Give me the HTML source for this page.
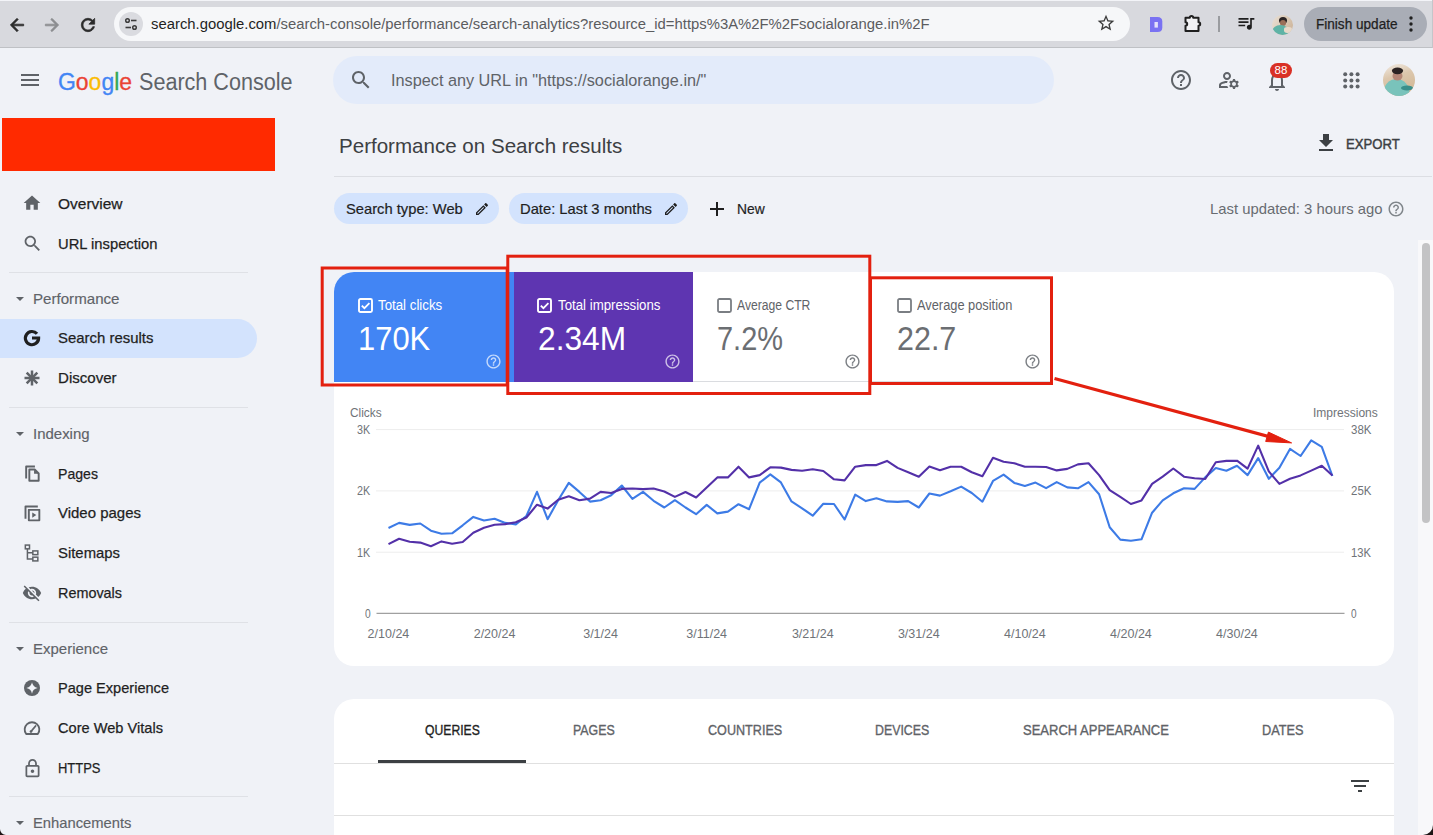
<!DOCTYPE html>
<html><head><meta charset="utf-8"><style>*{box-sizing:border-box;margin:0;padding:0}
html,body{width:1433px;height:835px;overflow:hidden;background:#f0f2f7;font-family:"Liberation Sans",sans-serif;position:relative}
.abs{position:absolute}
.t{position:absolute;white-space:nowrap;line-height:normal;transform-origin:0 0}
svg{overflow:visible}</style></head><body>
<div class="abs" style="left:0;top:0;width:1433px;height:48px;background:#d8d9de"></div>
<div class="abs" style="left:0;top:0;width:1433px;height:1px;background:#f3f4f8"></div>
<div class="abs" style="left:0;top:47px;width:1433px;height:1px;background:#bfc1c5"></div>
<div class="abs" style="left:114px;top:7px;width:1016px;height:34px;border-radius:17px;background:#f6f7f9"></div>
<div class="abs" style="left:119px;top:12px;width:24px;height:24px;border-radius:12px;background:#dadbe0"></div>
<svg class="abs" style="left:123px;top:16px" width="16" height="16" viewBox="0 0 16 16"><circle cx="4.5" cy="4.5" r="1.8" fill="none" stroke="#3c3c3c" stroke-width="1.5"/><line x1="8" y1="4.5" x2="13.5" y2="4.5" stroke="#3c3c3c" stroke-width="1.6"/><circle cx="11.5" cy="11.5" r="1.8" fill="none" stroke="#3c3c3c" stroke-width="1.5"/><line x1="2.5" y1="11.5" x2="8" y2="11.5" stroke="#3c3c3c" stroke-width="1.6"/></svg>
<svg class="abs" style="left:6.5px;top:14.5px" width="20" height="20" viewBox="0 0 24 24"><path d="M20 11H7.83l5.59-5.59L12 4l-8 8 8 8 1.41-1.41L7.83 13H20v-2z" fill="#2b2b2b" stroke="#2b2b2b" stroke-width="0.9"/></svg>
<svg class="abs" style="left:42px;top:14.5px" width="20" height="20" viewBox="0 0 24 24"><path d="M12 4l-1.41 1.41L16.17 11H4v2h12.17l-5.58 5.59L12 20l8-8z" fill="#8c8d90" stroke="#8c8d90" stroke-width="0.9"/></svg>
<svg class="abs" style="left:78.3px;top:14.5px" width="20" height="20" viewBox="0 0 24 24"><path stroke="#2b2b2b" stroke-width="0.9" d="M17.65 6.35C16.2 4.9 14.21 4 12 4c-4.42 0-7.99 3.58-7.99 8s3.57 8 7.99 8c3.73 0 6.84-2.55 7.73-6h-2.08c-.82 2.33-3.04 4-5.65 4-3.31 0-6-2.69-6-6s2.69-6 6-6c1.66 0 3.14.69 4.22 1.78L13 11h7V4l-2.35 2.35z" fill="#2b2b2b"/></svg>
<div class="t" style="left:151px;top:15.6px;font-size:14.85px;color:#5b5c5f"><span style="color:#1f1f1f">search.google.com</span>/search-console/performance/search-analytics?resource_id=https%3A%2F%2Fsocialorange.in%2F</div>
<svg class="abs" style="left:1096px;top:13px" width="20" height="20" viewBox="0 0 24 24"><path d="M22 9.24l-7.19-.62L12 2 9.19 8.63 2 9.24l5.46 4.73L5.82 21 12 17.27 18.18 21l-1.63-7.03L22 9.24zM12 15.4l-3.76 2.27 1-4.28-3.32-2.88 4.38-.38L12 6.1l1.71 4.04 4.38.38-3.32 2.88 1 4.28L12 15.4z" fill="#3c3c3c"/></svg>
<svg class="abs" style="left:1150px;top:16.7px" width="13" height="15" viewBox="0 0 13 15"><path d="M0 0H7.5Q12.3 0 12.3 4.5V10.5Q12.3 15 7.5 15H0Z" fill="#7a72f2"/><rect x="4.5" y="5" width="3.4" height="5.6" fill="#e3e1fb"/></svg>
<svg class="abs" style="left:1184px;top:14px" width="18" height="18" viewBox="0 0 18 18"><path d="M1.5 3.8H5.8A1.7 1.7 0 0 1 9.2 3.8H14.5V8.3A1.7 1.7 0 0 1 14.5 11.7V17H1.5V11.7A1.7 1.7 0 0 0 1.5 8.3Z" fill="#f2f2f4" stroke="#1f1f1f" stroke-width="2" stroke-linejoin="round"/></svg>
<div class="abs" style="left:1218px;top:16px;width:1.5px;height:16px;background:#9a9ca0"></div>
<svg class="abs" style="left:1236px;top:13px" width="20" height="20" viewBox="0 0 24 24"><path d="M22 6h-5v8.18c-.31-.11-.65-.18-1-.18-1.66 0-3 1.34-3 3s1.34 3 3 3 3-1.34 3-3V8h3V6zm-7 0H3v2h12V6zm0 4H3v2h12v-2zm-4 4H3v2h8v-2z" fill="#1f1f1f"/></svg>
<div class="abs" style="left:1272px;top:14.5px;width:21px;height:20px;border-radius:50%;overflow:hidden;background:linear-gradient(120deg,#e9e0d6 0%,#dccbb8 50%,#c8ad90 100%)"><div class="abs" style="left:7px;top:2px;width:8px;height:7px;border-radius:50%;background:#2c2525"></div><div class="abs" style="left:8px;top:5px;width:6px;height:6px;border-radius:50%;background:#9a6f58"></div><div class="abs" style="left:0px;top:10px;width:17px;height:14px;border-radius:50% 50% 0 0;background:#5fb3a6"></div><div class="abs" style="left:12px;top:12px;width:8px;height:6px;border-radius:40%;background:#e7d9c9"></div></div>
<div class="abs" style="left:1304px;top:7px;width:123px;height:34px;border-radius:17px;background:#a9adb6"></div>
<div class="t" style="left:1316.0px;top:16.3px;font-size:14.00px;color:#1f1f1f;transform:scaleX(0.9696);-webkit-text-stroke:0.25px #1f1f1f;">Finish update</div>
<svg class="abs" style="left:1406px;top:15px" width="10" height="18" viewBox="0 0 10 18"><circle cx="5" cy="3" r="1.7" fill="#1f1f1f"/><circle cx="5" cy="9" r="1.7" fill="#1f1f1f"/><circle cx="5" cy="15" r="1.7" fill="#1f1f1f"/></svg>
<div class="abs" style="left:1431.5px;top:0;width:1.5px;height:48px;background:#c4c6ca"></div>
<svg class="abs" style="left:18px;top:68px" width="24" height="24" viewBox="0 0 24 24"><path d="M3 18h18v-2H3v2zm0-5h18v-2H3v2zm0-7v2h18V6H3z" fill="#5f6368"/></svg>
<div class="t" style="left:58px;top:68.8px;font-size:23px;transform:scaleX(0.9977);-webkit-text-stroke:0.3px currentColor"><span style="color:#4285f4">G</span><span style="color:#ea4335">o</span><span style="color:#fbbc05">o</span><span style="color:#4285f4">g</span><span style="color:#34a853">l</span><span style="color:#ea4335">e</span></div>
<div class="t" style="left:138.5px;top:68.6px;font-size:23.00px;color:#5f6368;transform:scaleX(0.9380);">Search Console</div>
<div class="abs" style="left:333px;top:56px;width:721px;height:48px;border-radius:24px;background:#e3ebfa"></div>
<svg class="abs" style="left:349px;top:68px" width="24" height="24" viewBox="0 0 24 24"><path d="M15.5 14h-.79l-.28-.27C15.41 12.59 16 11.11 16 9.5 16 5.91 13.09 3 9.5 3S3 5.91 3 9.5 5.91 16 9.5 16c1.61 0 3.09-.59 4.23-1.57l.27.28v.79l5 4.99L20.49 19l-4.99-5zm-6 0C7.01 14 5 11.99 5 9.5S7.01 5 9.5 5 14 7.01 14 9.5 11.99 14 9.5 14z" fill="#5f6368"/></svg>
<div class="t" style="left:391.0px;top:70.5px;font-size:16.25px;color:#5f6368;">Inspect any URL in "https://socialorange.in/"</div>
<svg class="abs" style="left:1169px;top:68px" width="24" height="24" viewBox="0 0 24 24"><path d="M11 18h2v-2h-2v2zm1-16C6.48 2 2 6.48 2 12s4.48 10 10 10 10-4.48 10-10S17.52 2 12 2zm0 18c-4.41 0-8-3.59-8-8s3.59-8 8-8 8 3.59 8 8-3.59 8-8 8zm0-14c-2.21 0-4 1.79-4 4h2c0-1.1.9-2 2-2s2 .9 2 2c0 2-3 1.75-3 5h2c0-2.25 3-2.5 3-5 0-2.21-1.79-4-4-4z" fill="#5f6368"/></svg>
<svg class="abs" style="left:1217px;top:68px" width="24" height="24" viewBox="0 0 24 24"><path d="M4 18v-.65c0-.34.16-.66.41-.81C6.1 15.53 8.03 15 10 15c.03 0 .05 0 .08.01.1-.7.3-1.37.59-1.98-.22-.02-.44-.03-.67-.03-2.42 0-4.68.67-6.61 1.82-.88.52-1.39 1.5-1.39 2.53V20h9.26c-.42-.6-.75-1.28-.97-2H4zm6-6c2.21 0 4-1.790 4-4s-1.79-4-4-4-4 1.79-4 4 1.79 4 4 4zm0-6c1.1 0 2 .9 2 2s-.9 2-2 2-2-.9-2-2 .9-2 2-2zm10.750 10c0-.22-.03-.42-.06-.63l1.14-1.01-1-1.73-1.45.49c-.32-.27-.68-.48-1.08-.63L18 11h-2l-.3 1.49c-.4.15-.76.36-1.08.63l-1.45-.49-1 1.73 1.14 1.01c-.03.21-.06.41-.06.63s.03.42.06.63l-1.14 1.01 1 1.73 1.45-.49c.32.27.68.48 1.08.63L16 21h2l.3-1.49c.4-.15.76-.36 1.08-.63l1.45.49 1-1.73-1.14-1.01c.03-.21.06-.41.06-.63zM17 18c-1.1 0-2-.9-2-2s.9-2 2-2 2 .9 2 2-.9 2-2 2z" fill="#5f6368"/></svg>
<svg class="abs" style="left:1265px;top:69px" width="24" height="24" viewBox="0 0 24 24"><path d="M12 22c1.1 0 2-.9 2-2h-4c0 1.1.89 2 2 2zm6-6v-5c0-3.07-1.64-5.640-4.5-6.32V4c0-.83-.67-1.5-1.5-1.5s-1.5.67-1.5 1.5v.68C7.63 5.36 6 7.92 6 11v5l-2 2v1h16v-1l-2-2zm-2 1H8v-6c0-2.48 1.51-4.5 4-4.5s4 2.02 4 4.5v6z" fill="#5f6368"/></svg>
<div class="abs" style="left:1270px;top:62.5px;width:22px;height:15.5px;border-radius:8px;background:#d93025"></div>
<div class="t" style="left:1270px;top:63px;width:22px;text-align:center;font-size:11.5px;color:#fff;line-height:15px">88</div>
<svg class="abs" style="left:1342.5px;top:71.5px" width="18" height="18" viewBox="0 0 18 18"><circle cx="2.2" cy="2.2" r="2" fill="#5f6368"/><circle cx="2.2" cy="8.4" r="2" fill="#5f6368"/><circle cx="2.2" cy="14.6" r="2" fill="#5f6368"/><circle cx="8.4" cy="2.2" r="2" fill="#5f6368"/><circle cx="8.4" cy="8.4" r="2" fill="#5f6368"/><circle cx="8.4" cy="14.6" r="2" fill="#5f6368"/><circle cx="14.6" cy="2.2" r="2" fill="#5f6368"/><circle cx="14.6" cy="8.4" r="2" fill="#5f6368"/><circle cx="14.6" cy="14.6" r="2" fill="#5f6368"/></svg>
<svg class="abs" style="left:1383px;top:64px" width="32" height="32" viewBox="0 0 32 32"><defs><clipPath id="av"><circle cx="16" cy="16" r="16"/></clipPath><linearGradient id="avg" x1="0" y1="0" x2="0.3" y2="1"><stop offset="0" stop-color="#f1ebe4"/><stop offset="0.45" stop-color="#dcc7ad"/><stop offset="1" stop-color="#d2b896"/></linearGradient></defs><g clip-path="url(#av)"><rect width="32" height="32" fill="url(#avg)"/><ellipse cx="13.5" cy="29" rx="13" ry="14" fill="#79c3bb"/><ellipse cx="24" cy="24" rx="6" ry="2.6" fill="#3a8f8a"/><ellipse cx="14.5" cy="12" rx="5" ry="4.6" fill="#b48676"/><ellipse cx="14.5" cy="6.8" rx="5.6" ry="3.4" fill="#2a2222"/></g></svg>
<div class="abs" style="left:2px;top:118px;width:273px;height:53px;background:#ff2a00"></div>
<div class="abs" style="left:0;top:319px;width:257px;height:39px;background:#d3e3fd;border-radius:0 20px 20px 0"></div>
<div class="t" style="left:58.0px;top:194.5px;font-size:15.00px;color:#1f1f1f;transform:scaleX(1.0318);-webkit-text-stroke:0.25px #1f1f1f;">Overview</div>
<div class="t" style="left:58.0px;top:234.5px;font-size:15.00px;color:#1f1f1f;transform:scaleX(0.9836);-webkit-text-stroke:0.25px #1f1f1f;">URL inspection</div>
<div class="abs" style="left:9px;top:272px;width:239px;height:1px;background:#dfe1e6"></div>
<div class="t" style="left:33.3px;top:289.7px;font-size:15.00px;color:#5f6368;transform:scaleX(1.0073);-webkit-text-stroke:0.15px #5f6368;">Performance</div>
<div class="abs" style="left:16px;top:297.0px;width:0;height:0;border-left:4px solid transparent;border-right:4px solid transparent;border-top:4.5px solid #5f6368"></div>
<div class="t" style="left:58.0px;top:329.4px;font-size:15.00px;color:#1f1f1f;transform:scaleX(0.9950);-webkit-text-stroke:0.25px #1f1f1f;">Search results</div>
<div class="t" style="left:58.0px;top:369.4px;font-size:15.00px;color:#1f1f1f;transform:scaleX(1.0044);-webkit-text-stroke:0.25px #1f1f1f;">Discover</div>
<div class="abs" style="left:9px;top:407px;width:239px;height:1px;background:#dfe1e6"></div>
<div class="t" style="left:33.3px;top:424.7px;font-size:15.00px;color:#5f6368;transform:scaleX(0.9980);-webkit-text-stroke:0.15px #5f6368;">Indexing</div>
<div class="abs" style="left:16px;top:432.0px;width:0;height:0;border-left:4px solid transparent;border-right:4px solid transparent;border-top:4.5px solid #5f6368"></div>
<div class="t" style="left:58.0px;top:464.6px;font-size:15.00px;color:#1f1f1f;transform:scaleX(0.9405);-webkit-text-stroke:0.25px #1f1f1f;">Pages</div>
<div class="t" style="left:58.0px;top:504.4px;font-size:15.00px;color:#1f1f1f;transform:scaleX(0.9984);-webkit-text-stroke:0.25px #1f1f1f;">Video pages</div>
<div class="t" style="left:58.0px;top:544.4px;font-size:15.00px;color:#1f1f1f;transform:scaleX(0.9915);-webkit-text-stroke:0.25px #1f1f1f;">Sitemaps</div>
<div class="t" style="left:58.0px;top:584.4px;font-size:15.00px;color:#1f1f1f;transform:scaleX(0.9597);-webkit-text-stroke:0.25px #1f1f1f;">Removals</div>
<div class="abs" style="left:9px;top:622px;width:239px;height:1px;background:#dfe1e6"></div>
<div class="t" style="left:33.3px;top:639.7px;font-size:15.00px;color:#5f6368;transform:scaleX(0.9994);-webkit-text-stroke:0.15px #5f6368;">Experience</div>
<div class="abs" style="left:16px;top:647.0px;width:0;height:0;border-left:4px solid transparent;border-right:4px solid transparent;border-top:4.5px solid #5f6368"></div>
<div class="t" style="left:58.0px;top:679.0px;font-size:15.00px;color:#1f1f1f;transform:scaleX(0.9716);-webkit-text-stroke:0.25px #1f1f1f;">Page Experience</div>
<div class="t" style="left:58.0px;top:719.0px;font-size:15.00px;color:#1f1f1f;transform:scaleX(0.9738);-webkit-text-stroke:0.25px #1f1f1f;">Core Web Vitals</div>
<div class="t" style="left:58.0px;top:758.8px;font-size:15.00px;color:#1f1f1f;transform:scaleX(0.8644);-webkit-text-stroke:0.25px #1f1f1f;">HTTPS</div>
<div class="abs" style="left:9px;top:796px;width:239px;height:1px;background:#dfe1e6"></div>
<div class="t" style="left:33.3px;top:813.7px;font-size:15.00px;color:#5f6368;transform:scaleX(0.9844);-webkit-text-stroke:0.15px #5f6368;">Enhancements</div>
<div class="abs" style="left:16px;top:821.0px;width:0;height:0;border-left:4px solid transparent;border-right:4px solid transparent;border-top:4.5px solid #5f6368"></div>
<svg class="abs" style="left:22.0px;top:193.0px" width="20" height="20" viewBox="0 0 24 24"><path d="M10 20v-6h4v6h5v-8h3L12 3 2 12h3v8z" fill="#5f6368"/></svg>
<svg class="abs" style="left:21.5px;top:233.0px" width="21" height="21" viewBox="0 0 24 24"><path d="M15.5 14h-.79l-.28-.27C15.41 12.59 16 11.11 16 9.5 16 5.91 13.09 3 9.5 3S3 5.91 3 9.5 5.910 16 9.5 16c1.61 0 3.09-.59 4.23-1.57l.27.28v.79l5 4.99L20.49 19l-4.99-5zm-6 0C7.01 14 5 11.99 5 9.5S7.01 5 9.5 5 14 7.01 14 9.5 11.99 14 9.5 14z" fill="#5f6368"/></svg>
<svg class="abs" style="left:22.3px;top:328.2px" width="20" height="20" viewBox="0 0 20 20"><path d="M15.0 5.8A6.6 6.6 0 1 0 16.6 10H10" fill="none" stroke="#1f1f1f" stroke-width="3.2"/></svg>
<svg class="abs" style="left:22.0px;top:368.0px" width="20" height="20" viewBox="0 0 24 24"><g stroke="#5f6368" stroke-width="3" stroke-linecap="butt"><line x1="12" y1="3" x2="12" y2="21"/><line x1="3" y1="12" x2="21" y2="12"/><line x1="5.6" y1="5.6" x2="18.4" y2="18.4"/><line x1="18.4" y1="5.6" x2="5.6" y2="18.4"/></g></svg>
<svg class="abs" style="left:22.0px;top:463.0px" width="20" height="20" viewBox="0 0 24 24"><g fill="none" stroke="#5f6368" stroke-width="2.3" stroke-linejoin="round"><path d="M5 18.5V4.2H15.5"/><path d="M8.8 7.8H15.2L20 12.6V21.2H8.8Z"/></g><path d="M14.5 8v5h5z" fill="#5f6368"/></svg>
<svg class="abs" style="left:22.0px;top:503.0px" width="20" height="20" viewBox="0 0 24 24"><g fill="none" stroke="#5f6368" stroke-width="2.3" stroke-linejoin="round"><path d="M4.2 19V4.2H19"/><rect x="8.2" y="8.2" width="12.6" height="12.6"/></g><path d="M12.3 11.3L17.2 14.5L12.3 17.7Z" fill="#5f6368"/></svg>
<svg class="abs" style="left:22.0px;top:543.0px" width="20" height="20" viewBox="0 0 24 24"><g fill="none" stroke="#5f6368" stroke-width="1.8"><rect x="4" y="2.5" width="5" height="4.5"/><rect x="13" y="9.5" width="6" height="4.5"/><rect x="13" y="17" width="6" height="4.5"/><path d="M6.5 7v12.3H13M6.5 11.8H13"/></g></svg>
<svg class="abs" style="left:22.0px;top:583.0px" width="20" height="20" viewBox="0 0 24 24"><path d="M12 7c2.76 0 5 2.24 5 5 0 .65-.13 1.26-.36 1.83l2.92 2.92c1.51-1.26 2.7-2.89 3.43-4.75-1.73-4.39-6-7.5-11-7.5-1.4 0-2.74.25-3.98.7l2.16 2.16C10.74 7.13 11.35 7 12 7zM2 4.27l2.28 2.28.46.46C3.08 8.3 1.78 10.02 1 12c1.73 4.39 6 7.5 11 7.5 1.55 0 3.03-.3 4.38-.84l.42.42L19.73 22 21 20.73 3.27 3 2 4.27zM7.53 9.8l1.55 1.55c-.05.21-.08.43-.08.65 0 1.66 1.34 3 3 3 .22 0 .44-.03.65-.08l1.55 1.55c-.67.33-1.41.53-2.2.53-2.76 0-5-2.24-5-5 0-.79.2-1.53.53-2.2zm4.31-.78l3.15 3.15.02-.16c0-1.66-1.34-3-3-3l-.17.01z" fill="#5f6368"/></svg>
<svg class="abs" style="left:22.0px;top:678.0px" width="20" height="20" viewBox="0 0 24 24"><circle cx="12" cy="12" r="9.6" fill="#5f6368"/><path d="M12 5.2 Q13 11 18.8 12 Q13 13 12 18.8 Q11 13 5.2 12 Q11 11 12 5.2z" fill="#f1f3f8"/></svg>
<svg class="abs" style="left:22.0px;top:718.0px" width="20" height="20" viewBox="0 0 24 24"><g fill="none" stroke="#5f6368" stroke-width="2.2" stroke-linejoin="round" stroke-linecap="round"><path d="M5 19.2A8.8 8.8 0 1 1 19 19.2Z"/><path d="M10.8 16.2L16.3 9.6"/></g><circle cx="10.8" cy="16.2" r="1.6" fill="#5f6368"/></svg>
<svg class="abs" style="left:22.0px;top:758.0px" width="21" height="21" viewBox="0 0 24 24"><path d="M18 8h-1V6c0-2.76-2.24-5-5-5S7 3.24 7 6v2H6c-1.1 0-2 .9-2 2v10c0 1.1.9 2 2 2h12c1.1 0 2-.9 2-2V10c0-1.1-.9-2-2-2zM9 6c0-1.66 1.34-3 3-3s3 1.34 3 3v2H9V6zm9 14H6V10h12v10zm-6-3c1.1 0 2-.9 2-2s-.9-2-2-2-2 .9-2 2 .9 2 2 2z" fill="#5f6368"/></svg>
<div class="t" style="left:338.7px;top:133.8px;font-size:21.00px;color:#3c4043;transform:scaleX(0.9787);">Performance on Search results</div>
<svg class="abs" style="left:1314.0px;top:131.0px" width="24" height="24" viewBox="0 0 24 24"><path d="M19 9h-4V3H9v6H5l7 7 7-7zM5 18v2h14v-2H5z" fill="#3c4043"/></svg>
<div class="t" style="left:1346.0px;top:135.9px;font-size:14.50px;color:#3c4043;transform:scaleX(0.9063);-webkit-text-stroke:0.45px #3c4043;">EXPORT</div>
<div class="abs" style="left:334px;top:176px;width:1098px;height:1px;background:#dcdee3"></div>
<div class="abs" style="left:334px;top:193px;width:165px;height:31px;border-radius:16px;background:#d3e3fd"></div>
<div class="t" style="left:346.2px;top:199.5px;font-size:15.00px;color:#1f1f1f;transform:scaleX(0.9819);-webkit-text-stroke:0.20px #1f1f1f;">Search type: Web</div>
<div class="abs" style="left:508.5px;top:193px;width:179.5px;height:31px;border-radius:16px;background:#d3e3fd"></div>
<div class="t" style="left:520.0px;top:199.5px;font-size:15.00px;color:#1f1f1f;transform:scaleX(0.9833);-webkit-text-stroke:0.20px #1f1f1f;">Date: Last 3 months</div>
<svg class="abs" style="left:473.5px;top:201.0px" width="16" height="16" viewBox="0 0 24 24"><path d="M3 17.25V21h3.75L17.81 9.94l-3.75-3.75L3 17.25zM5.92 19H5v-.92l9.06-9.06.92.92L5.92 19zM20.71 5.63l-2.34-2.34c-.2-.2-.45-.29-.71-.29s-.51.1-.7.29l-1.83 1.83 3.75 3.75 1.83-1.83c.39-.39.39-1.02 0-1.41z" fill="#1f1f1f"/></svg>
<svg class="abs" style="left:662.5px;top:201.0px" width="16" height="16" viewBox="0 0 24 24"><path d="M3 17.25V21h3.75L17.81 9.94l-3.75-3.75L3 17.25zM5.92 19H5v-.92l9.06-9.06.92.92L5.92 19zM20.71 5.63l-2.34-2.34c-.2-.2-.45-.29-.71-.29s-.51.1-.7.29l-1.83 1.83 3.75 3.75 1.83-1.83c.39-.39.39-1.02 0-1.41z" fill="#1f1f1f"/></svg>
<svg class="abs" style="left:704.5px;top:196.5px" width="24" height="24" viewBox="0 0 24 24"><path d="M19 13h-6v6h-2v-6H5v-2h6V5h2v6h6v2z" fill="#1f1f1f"/></svg>
<div class="t" style="left:736.8px;top:199.5px;font-size:15.00px;color:#1f1f1f;transform:scaleX(0.9230);-webkit-text-stroke:0.20px #1f1f1f;">New</div>
<div class="t" style="left:1210.0px;top:200.0px;font-size:15.00px;color:#686c71;transform:scaleX(0.9897);">Last updated: 3 hours ago</div>
<svg class="abs" style="left:1386.5px;top:200.0px" width="18" height="18" viewBox="0 0 24 24"><path d="M11 18h2v-2h-2v2zm1-16C6.48 2 2 6.48 2 12s4.48 10 10 10 10-4.48 10-10S17.52 2 12 2zm0 18c-4.41 0-8-3.59-8-8s3.59-8 8-8 8 3.59 8 8-3.59 8-8 8zm0-14c-2.21 0-4 1.79-4 4h2c0-1.1.9-2 2-2s2 .9 2 2c0 2-3 1.75-3 5h2c0-2.25 3-2.5 3-5 0-2.21-1.79-4-4-4z" fill="#80868b"/></svg>
<div class="abs" style="left:334px;top:272.2px;width:1059.5px;height:393.8px;border-radius:20px;background:#fff;overflow:hidden"><div class="abs" style="left:0;top:0;width:180px;height:109.5px;background:#4285f4"></div><div class="abs" style="left:179.5px;top:0;width:179.5px;height:109.5px;background:#5e35b1"></div><div class="abs" style="left:359px;top:108.5px;width:360px;height:1px;background:#dadce0"></div></div>
<svg class="abs" style="left:357.5px;top:297.5px" width="15" height="15" viewBox="0 0 15 15"><rect x="1" y="1" width="13" height="13" rx="1.5" fill="none" stroke="#fff" stroke-width="1.9"/><path d="M3.8 7.6l2.6 2.6 5-5" fill="none" stroke="#fff" stroke-width="1.8"/></svg>
<div class="t" style="left:378.3px;top:296.9px;font-size:14.00px;color:#fff;transform:scaleX(0.9485);">Total clicks</div>
<div class="t" style="left:358.2px;top:321.1px;font-size:32.50px;color:#fff;transform:scaleX(0.9512);">170K</div>
<svg class="abs" style="left:484.5px;top:352.5px" width="17" height="17" viewBox="0 0 24 24"><path d="M11 18h2v-2h-2v2zm1-16C6.48 2 2 6.48 2 12s4.48 10 10 10 10-4.48 10-10S17.52 2 12 2zm0 18c-4.41 0-8-3.59-8-8s3.59-8 8-8 8 3.59 8 8-3.59 8-8 8zm0-14c-2.21 0-4 1.79-4 4h2c0-1.1.9-2 2-2s2 .9 2 2c0 2-3 1.75-3 5h2c0-2.25 3-2.5 3-5 0-2.21-1.79-4-4-4z" fill="rgba(255,255,255,.7)"/></svg>
<svg class="abs" style="left:537.0px;top:297.5px" width="15" height="15" viewBox="0 0 15 15"><rect x="1" y="1" width="13" height="13" rx="1.5" fill="none" stroke="#fff" stroke-width="1.9"/><path d="M3.8 7.6l2.6 2.6 5-5" fill="none" stroke="#fff" stroke-width="1.8"/></svg>
<div class="t" style="left:557.8px;top:296.9px;font-size:14.00px;color:#fff;transform:scaleX(0.9477);">Total impressions</div>
<div class="t" style="left:537.7px;top:321.1px;font-size:32.50px;color:#fff;transform:scaleX(0.9753);">2.34M</div>
<svg class="abs" style="left:664.0px;top:352.5px" width="17" height="17" viewBox="0 0 24 24"><path d="M11 18h2v-2h-2v2zm1-16C6.48 2 2 6.48 2 12s4.48 10 10 10 10-4.48 10-10S17.52 2 12 2zm0 18c-4.41 0-8-3.59-8-8s3.59-8 8-8 8 3.59 8 8-3.59 8-8 8zm0-14c-2.21 0-4 1.79-4 4h2c0-1.1.9-2 2-2s2 .9 2 2c0 2-3 1.75-3 5h2c0-2.25 3-2.5 3-5 0-2.21-1.79-4-4-4z" fill="rgba(255,255,255,.7)"/></svg>
<svg class="abs" style="left:716.5px;top:297.5px" width="15" height="15" viewBox="0 0 15 15"><rect x="1" y="1" width="13" height="13" rx="1.5" fill="none" stroke="#7a7e83" stroke-width="1.8"/></svg>
<div class="t" style="left:737.3px;top:296.9px;font-size:14.00px;color:#5f6368;transform:scaleX(0.8681);">Average CTR</div>
<div class="t" style="left:717.2px;top:321.1px;font-size:32.50px;color:#6b6e72;transform:scaleX(0.8909);">7.2%</div>
<svg class="abs" style="left:843.5px;top:352.5px" width="17" height="17" viewBox="0 0 24 24"><path d="M11 18h2v-2h-2v2zm1-16C6.48 2 2 6.48 2 12s4.48 10 10 10 10-4.48 10-10S17.52 2 12 2zm0 18c-4.41 0-8-3.59-8-8s3.59-8 8-8 8 3.59 8 8-3.59 8-8 8zm0-14c-2.21 0-4 1.79-4 4h2c0-1.1.9-2 2-2s2 .9 2 2c0 2-3 1.75-3 5h2c0-2.25 3-2.5 3-5 0-2.21-1.79-4-4-4z" fill="#7a7e83"/></svg>
<svg class="abs" style="left:896.5px;top:297.5px" width="15" height="15" viewBox="0 0 15 15"><rect x="1" y="1" width="13" height="13" rx="1.5" fill="none" stroke="#7a7e83" stroke-width="1.8"/></svg>
<div class="t" style="left:917.3px;top:296.9px;font-size:14.00px;color:#5f6368;transform:scaleX(0.9160);">Average position</div>
<div class="t" style="left:897.2px;top:321.1px;font-size:32.50px;color:#6b6e72;transform:scaleX(0.9374);">22.7</div>
<svg class="abs" style="left:1023.5px;top:352.5px" width="17" height="17" viewBox="0 0 24 24"><path d="M11 18h2v-2h-2v2zm1-16C6.48 2 2 6.48 2 12s4.48 10 10 10 10-4.48 10-10S17.52 2 12 2zm0 18c-4.41 0-8-3.59-8-8s3.59-8 8-8 8 3.59 8 8-3.59 8-8 8zm0-14c-2.21 0-4 1.79-4 4h2c0-1.1.9-2 2-2s2 .9 2 2c0 2-3 1.75-3 5h2c0-2.25 3-2.5 3-5 0-2.21-1.79-4-4-4z" fill="#7a7e83"/></svg>
<div class="t" style="left:350.2px;top:406.0px;font-size:12.00px;color:#6f7378;transform:scaleX(0.9875);">Clicks</div>
<div class="t" style="left:1312.6px;top:406.0px;font-size:12.00px;color:#6f7378;transform:scaleX(1.0017);">Impressions</div>
<div class="t" style="left:357.3px;top:422.9px;font-size:12.00px;color:#6f7378;transform:scaleX(0.8992);">3K</div>
<div class="t" style="left:357.3px;top:484.2px;font-size:12.00px;color:#6f7378;transform:scaleX(0.8992);">2K</div>
<div class="t" style="left:357.3px;top:545.5px;font-size:12.00px;color:#6f7378;transform:scaleX(0.8992);">1K</div>
<div class="t" style="left:364.7px;top:606.7px;font-size:12.00px;color:#6f7378;transform:scaleX(0.8539);">0</div>
<div class="t" style="left:1351.3px;top:422.9px;font-size:12.00px;color:#6f7378;transform:scaleX(0.9554);">38K</div>
<div class="t" style="left:1351.3px;top:484.2px;font-size:12.00px;color:#6f7378;transform:scaleX(0.9554);">25K</div>
<div class="t" style="left:1351.3px;top:545.5px;font-size:12.00px;color:#6f7378;transform:scaleX(0.9367);">13K</div>
<div class="t" style="left:1351.3px;top:606.7px;font-size:12.00px;color:#6f7378;transform:scaleX(0.8390);">0</div>
<svg class="abs" style="left:0;top:0" width="1433" height="835" viewBox="0 0 1433 835"><line x1="376" y1="429.6" x2="1344" y2="429.6" stroke="#ededed" stroke-width="1"/><line x1="376" y1="490.9" x2="1344" y2="490.9" stroke="#ededed" stroke-width="1"/><line x1="376" y1="552.2" x2="1344" y2="552.2" stroke="#ededed" stroke-width="1"/><line x1="376.5" y1="613.4" x2="1344.5" y2="613.4" stroke="#a0a0a0" stroke-width="1.2"/><polyline points="388.5,528.0 399.1,522.9 409.7,524.9 420.3,523.5 430.9,530.7 441.5,533.7 452.1,533.3 462.7,525.3 473.3,516.9 484.0,520.5 494.6,518.7 505.2,522.9 515.8,524.4 526.4,516.0 537.0,491.8 547.6,519.2 558.2,500.2 568.8,482.9 579.4,491.9 590.0,501.6 600.6,500.2 611.2,495.2 621.8,485.5 632.4,498.9 643.0,491.9 653.6,500.8 664.3,507.5 674.9,500.2 685.5,507.5 696.1,514.2 706.7,504.9 717.3,513.4 727.9,511.6 738.5,504.2 749.1,509.2 759.7,482.6 770.3,474.3 780.9,482.4 791.5,501.4 802.1,508.3 812.7,515.7 823.3,503.8 834.0,504.0 844.6,519.5 855.2,494.7 865.8,501.1 876.4,498.2 887.0,501.4 897.6,501.9 908.2,501.1 918.8,507.5 929.4,493.5 940.0,495.6 950.6,491.3 961.2,486.6 971.8,493.0 982.4,501.7 993.0,480.9 1003.6,474.6 1014.3,482.9 1024.9,485.9 1035.5,482.6 1046.1,488.1 1056.7,482.1 1067.3,487.4 1077.9,488.3 1088.5,482.1 1099.1,494.3 1109.7,527.2 1120.3,539.6 1130.9,540.8 1141.5,539.3 1152.1,512.7 1162.7,500.4 1173.3,493.3 1184.0,488.2 1194.6,488.9 1205.2,477.4 1215.8,468.0 1226.4,470.8 1237.0,465.7 1247.6,475.1 1258.2,458.1 1268.8,478.8 1279.4,467.7 1290.0,448.9 1300.6,456.0 1311.2,440.4 1321.8,446.9 1332.4,476.0" fill="none" stroke="#3d7be6" stroke-width="2.1" stroke-linejoin="round"/><polyline points="388.5,544.1 399.1,538.8 409.7,541.7 420.3,542.6 430.9,546.2 441.5,541.4 452.1,543.8 462.7,542.0 473.3,532.8 484.0,527.7 494.6,524.7 505.2,524.1 515.8,522.3 526.4,517.5 537.0,504.7 547.6,508.6 558.2,499.7 568.8,496.3 579.4,500.2 590.0,498.6 600.6,491.9 611.2,493.0 621.8,488.9 632.4,488.5 643.0,489.1 653.6,488.5 664.3,491.5 674.9,496.9 685.5,492.0 696.1,497.5 706.7,487.4 717.3,477.4 727.9,477.4 738.5,466.7 749.1,477.4 759.7,475.1 770.3,467.3 780.9,467.6 791.5,469.9 802.1,470.7 812.7,469.2 823.3,471.0 834.0,479.3 844.6,480.4 855.2,466.7 865.8,465.1 876.4,465.1 887.0,460.9 897.6,467.9 908.2,472.3 918.8,476.8 929.4,466.5 940.0,470.3 950.6,466.7 961.2,466.7 971.8,472.3 982.4,476.2 993.0,457.8 1003.6,461.7 1014.3,463.2 1024.9,466.8 1035.5,466.8 1046.1,467.0 1056.7,470.4 1067.3,468.9 1077.9,464.4 1088.5,463.2 1099.1,475.1 1109.7,490.1 1120.3,496.9 1130.9,504.0 1141.5,500.4 1152.1,483.9 1162.7,476.7 1173.3,468.5 1184.0,476.7 1194.6,478.2 1205.2,479.0 1215.8,462.2 1226.4,460.9 1237.0,460.7 1247.6,468.6 1258.2,445.6 1268.8,471.4 1279.4,483.9 1290.0,478.8 1300.6,475.4 1311.2,470.6 1321.8,465.7 1332.4,475.4" fill="none" stroke="#5330a8" stroke-width="2.1" stroke-linejoin="round"/></svg>
<div class="t" style="left:367.6px;top:627.1px;font-size:12.50px;color:#6f7378;">2/10/24</div>
<div class="t" style="left:473.7px;top:627.1px;font-size:12.50px;color:#6f7378;">2/20/24</div>
<div class="t" style="left:583.2px;top:627.1px;font-size:12.50px;color:#6f7378;">3/1/24</div>
<div class="t" style="left:686.3px;top:627.1px;font-size:12.50px;color:#6f7378;">3/11/24</div>
<div class="t" style="left:791.9px;top:627.1px;font-size:12.50px;color:#6f7378;">3/21/24</div>
<div class="t" style="left:897.9px;top:627.1px;font-size:12.50px;color:#6f7378;">3/31/24</div>
<div class="t" style="left:1004.0px;top:627.1px;font-size:12.50px;color:#6f7378;">4/10/24</div>
<div class="t" style="left:1110.1px;top:627.1px;font-size:12.50px;color:#6f7378;">4/20/24</div>
<div class="t" style="left:1216.1px;top:627.1px;font-size:12.50px;color:#6f7378;">4/30/24</div>
<svg class="abs" style="left:0;top:0" width="1433" height="835" viewBox="0 0 1433 835"><g fill="none" stroke="#e3200f" stroke-width="3"><rect x="322.2" y="268" width="185" height="117"/><rect x="507.8" y="256.2" width="362" height="137.3"/><rect x="870.5" y="277.8" width="181" height="105.7"/><line x1="1054.5" y1="378.5" x2="1272" y2="437.5" stroke-width="3.2"/></g><path d="M1291.6 442.9 L1268.4 432.1 L1265.7 441.5z" fill="#e3200f" stroke="#e3200f" stroke-width="1"/></svg>
<div class="abs" style="left:334px;top:698.7px;width:1060px;height:200px;border-radius:20px;background:#fff"></div>
<div class="abs" style="left:334px;top:763px;width:1060px;height:1px;background:#e0e0e0"></div>
<div class="abs" style="left:334px;top:815px;width:1060px;height:1px;background:#e0e0e0"></div>
<div class="abs" style="left:377.6px;top:760.3px;width:148.2px;height:2.8px;background:#3c4043"></div>
<div class="t" style="left:424.5px;top:722.2px;font-size:14.30px;color:#1f1f1f;transform:scaleX(0.8514);-webkit-text-stroke:0.35px #1f1f1f;">QUERIES</div>
<div class="t" style="left:572.7px;top:722.2px;font-size:14.30px;color:#5f6368;transform:scaleX(0.8649);-webkit-text-stroke:0.35px #5f6368;">PAGES</div>
<div class="t" style="left:707.7px;top:722.2px;font-size:14.30px;color:#5f6368;transform:scaleX(0.8811);-webkit-text-stroke:0.35px #5f6368;">COUNTRIES</div>
<div class="t" style="left:875.4px;top:722.2px;font-size:14.30px;color:#5f6368;transform:scaleX(0.8649);-webkit-text-stroke:0.35px #5f6368;">DEVICES</div>
<div class="t" style="left:1022.9px;top:722.2px;font-size:14.30px;color:#5f6368;transform:scaleX(0.9089);-webkit-text-stroke:0.35px #5f6368;">SEARCH APPEARANCE</div>
<div class="t" style="left:1261.8px;top:722.2px;font-size:14.30px;color:#5f6368;transform:scaleX(0.8903);-webkit-text-stroke:0.35px #5f6368;">DATES</div>
<svg class="abs" style="left:1347.5px;top:774.0px" width="24" height="24" viewBox="0 0 24 24"><path d="M10 18h4v-2h-4v2zM3 6v2h18V6H3zm3 7h12v-2H6v2z" fill="#3c4043"/></svg>
<div class="abs" style="left:1418px;top:240px;width:15px;height:595px;background:#f8f8fa"></div>
<svg class="abs" style="left:1423px;top:825px" width="10" height="10" viewBox="0 0 10 10"><path d="M10 0V10H0A10 10 0 0 0 10 0Z" fill="#1c1414"/></svg><svg class="abs" style="left:0;top:829px" width="6" height="6" viewBox="0 0 6 6"><path d="M0 0V6H6A6 6 0 0 1 0 0Z" fill="#1c1414"/></svg>
<div class="abs" style="left:1421.5px;top:243px;width:8.5px;height:280px;border-radius:4px;background:#c3c3c5"></div>
</body></html>
